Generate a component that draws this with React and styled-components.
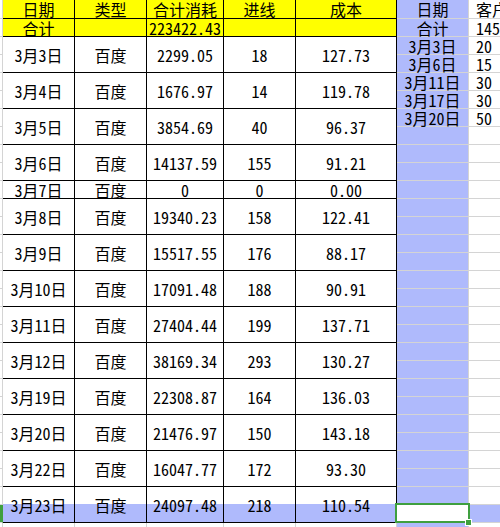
import React from "react";
import styled, { createGlobalStyle, css } from "styled-components";

const BLUE = "#afbafc";
const GRID = "#d4d4d4";
const GREEN = "#3f9f3f";
const YELLOW = "#ffff00";

const Global = createGlobalStyle`
  html, body {
    margin: 0;
    padding: 0;
    width: 500px;
    height: 527px;
    overflow: hidden;
    background: #ffffff;
  }
  #root {
    width: 500px;
    height: 527px;
    overflow: hidden;
  }
`;

const Sheet = styled.div`
  display: grid;
  grid-template-columns: 3px 72px 72px 77px 72px 101px 72px 120px;
  grid-template-rows: 19px repeat(29, 18px);
  width: 589px;
  font-family: "Noto Sans Mono CJK SC", "Noto Sans CJK SC", "DejaVu Sans", sans-serif;
  font-size: 16px;
  line-height: 16px;
  color: #000;
`;

const BaseCell = styled.div`
  box-sizing: border-box;
  display: flex;
  align-items: center;
  min-width: 0;
  white-space: nowrap;
  grid-column: ${(p) => p.$col};
  grid-row: ${(p) => p.$row} / span ${(p) => p.$span || 1};
`;

const RowHead = styled(BaseCell)`
  border-right: 1px solid ${GRID};
  border-bottom: 1px solid ${GRID};
  background: ${(p) => (p.$sel ? GREEN : "#ffffff")};
  ${(p) => p.$sel && css`border-right-color: ${GREEN};`}
`;

const DataCell = styled(BaseCell)`
  justify-content: center;
  border-right: 1px solid #000;
  border-bottom: 1px solid #000;
  background: ${(p) =>
    p.$head
      ? YELLOW
      : p.$selBottom
      ? `linear-gradient(to bottom, #ffffff 0, #ffffff 17px, ${BLUE} 17px, ${BLUE} 100%)`
      : "#ffffff"};
`;

const EmptyCell = styled(BaseCell)`
  border-right: 1px solid ${GRID};
  border-bottom: 1px solid ${GRID};
  background: #ffffff;
`;

const SideCell = styled(BaseCell)`
  justify-content: center;
  border-right: 1px solid ${GRID};
  border-bottom: 1px solid ${GRID};
  background: ${BLUE};
`;

const ActiveCell = styled(BaseCell)`
  position: relative;
  z-index: 2;
  border-right: 1px solid ${GRID};
  border-bottom: 1px solid ${GRID};
  background: #ffffff;
  &::after {
    content: "";
    position: absolute;
    left: -2px;
    top: -2px;
    right: -2px;
    bottom: -1px;
    border: 2px solid ${GREEN};
  }
  &::before {
    content: "";
    position: absolute;
    right: -4px;
    bottom: -4px;
    width: 5px;
    height: 5px;
    background: ${GREEN};
    border: 1px solid #ffffff;
    z-index: 3;
  }
`;

const FarCell = styled(BaseCell)`
  justify-content: flex-start;
  padding-left: 7px;
  overflow: hidden;
  border-right: 1px solid ${GRID};
  border-bottom: 1px solid ${GRID};
  background: ${(p) => (p.$sel ? BLUE : "#ffffff")};
`;

const mainRows = [
  { span: 1, head: true, cells: ["日期", "类型", "合计消耗", "进线", "成本"] },
  { span: 1, head: true, cells: ["合计", "", "223422.43", "", ""] },
  { span: 2, cells: ["3月3日", "百度", "2299.05", "18", "127.73"] },
  { span: 2, cells: ["3月4日", "百度", "1676.97", "14", "119.78"] },
  { span: 2, cells: ["3月5日", "百度", "3854.69", "40", "96.37"] },
  { span: 2, cells: ["3月6日", "百度", "14137.59", "155", "91.21"] },
  { span: 1, cells: ["3月7日", "百度", "0", "0", "0.00"] },
  { span: 2, cells: ["3月8日", "百度", "19340.23", "158", "122.41"] },
  { span: 2, cells: ["3月9日", "百度", "15517.55", "176", "88.17"] },
  { span: 2, cells: ["3月10日", "百度", "17091.48", "188", "90.91"] },
  { span: 2, cells: ["3月11日", "百度", "27404.44", "199", "137.71"] },
  { span: 2, cells: ["3月12日", "百度", "38169.34", "293", "130.27"] },
  { span: 2, cells: ["3月19日", "百度", "22308.87", "164", "136.03"] },
  { span: 2, cells: ["3月20日", "百度", "21476.97", "150", "143.18"] },
  { span: 2, cells: ["3月22日", "百度", "16047.77", "172", "93.30"] },
  { span: 2, cells: ["3月23日", "百度", "24097.48", "218", "110.54"] },
];

const sideData = ["日期", "合计", "3月3日", "3月6日", "3月11日", "3月17日", "3月20日"];
const farData = ["客户数", "145", "20", "15", "30", "30", "50"];

const SEL_ROW = 28;
const TOTAL_ROWS = 30;

export default function App() {
  const items = [];
  let r = 0;
  mainRows.forEach((row, i) => {
    const selBottom = r + row.span - 1 === SEL_ROW && row.span === 2;
    row.cells.forEach((txt, c) => {
      items.push(
        <DataCell
          key={`m-${i}-${c}`}
          $col={c + 2}
          $row={r + 1}
          $span={row.span}
          $head={row.head}
          $selBottom={selBottom}
        >
          {txt}
        </DataCell>
      );
    });
    r += row.span;
  });

  for (let k = 0; k < TOTAL_ROWS; k++) {
    items.push(<RowHead key={`h-${k}`} $col={1} $row={k + 1} $sel={k === SEL_ROW} />);
    if (k === SEL_ROW) {
      items.push(<ActiveCell key={`s-${k}`} $col={7} $row={k + 1} />);
    } else {
      items.push(
        <SideCell key={`s-${k}`} $col={7} $row={k + 1}>
          {sideData[k] || ""}
        </SideCell>
      );
    }
    items.push(
      <FarCell key={`f-${k}`} $col={8} $row={k + 1} $sel={k === SEL_ROW}>
        {farData[k] || ""}
      </FarCell>
    );
  }

  for (let c = 0; c < 5; c++) {
    items.push(<EmptyCell key={`e-${c}`} $col={c + 2} $row={TOTAL_ROWS} />);
  }

  return (
    <>
      <Global />
      <Sheet>{items}</Sheet>
    </>
  );
}
